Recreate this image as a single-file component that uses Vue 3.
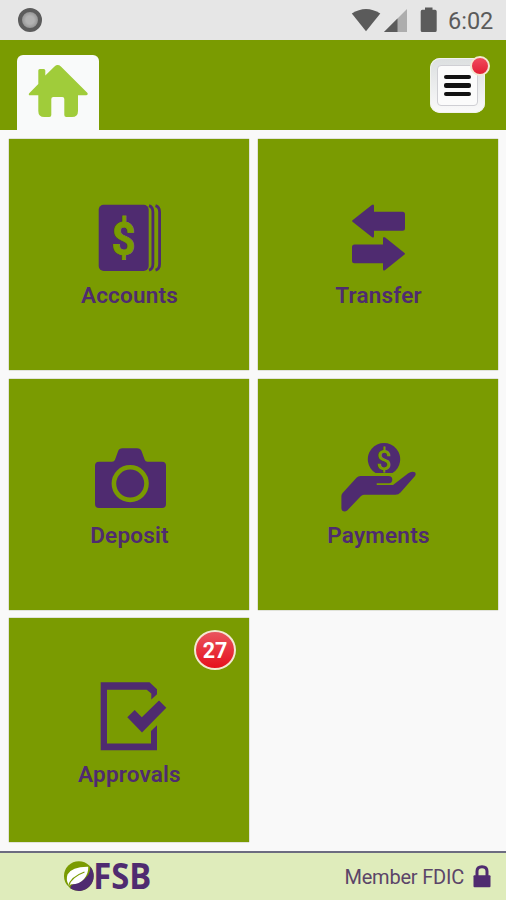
<script setup>
const tiles = [
  { id: 'accounts', label: 'Accounts' },
  { id: 'transfer', label: 'Transfer' },
  { id: 'deposit', label: 'Deposit' },
  { id: 'payments', label: 'Payments' },
  { id: 'approvals', label: 'Approvals', badge: 27 },
]
</script>

<template>
  <div class="screen">
    <div class="status">
      <span class="recorder"></span>
      <svg class="signals" width="90" height="40" viewBox="350 0 90 40">
        <path fill="#5b5b5b" d="M351.8 13.5Q366 4.5 380.3 13.5L366 31.3Z" />
        <path fill="#adadad" d="M407 9V32H384Z" />
        <path fill="#5b5b5b" d="M397.5 18.5V32H384Z" />
        <path fill="#5b5b5b" d="M425 7.5h7.5v2.3h2.6q1.6 0 1.6 1.6v19q0 1.6-1.6 1.6h-12.8q-1.6 0-1.6-1.6v-19q0-1.6 1.6-1.6h2.7z" />
      </svg>
      <span class="time">6:02</span>
    </div>

    <header class="header">
      <div class="home">
        <svg width="60" height="54" viewBox="0 0 60 54">
          <path fill="#a0cc3a" d="M10.3 20V6.5Q10.3 5 11.8 5H15.8Q17.3 5 17.3 6.5V11.5L26.5 2.4Q29.7-.2 32.9 2.4L59.5 29Q60.2 31.3 58 31.3H50V47Q50 53 44 53H38.3Q36.3 53 36.3 51V35Q36.3 33 34.3 33H25.3Q23.3 33 23.3 35V51Q23.3 53 21.3 53H16.3Q10.3 53 10.3 47V31.3H2Q.3 31.3 1 29.5Z" />
        </svg>
      </div>
      <div class="menu">
        <div class="menu-face"><i></i><i></i><i></i></div>
        <span class="dot"></span>
      </div>
    </header>

    <main class="grid">
      <div v-for="t in tiles" :key="t.id" class="tile">
        <svg class="icon" width="90" height="76" viewBox="0 0 90 76">
          <template v-if="t.id === 'accounts'">
            <rect x="14.7" y="5.7" width="50" height="66.3" rx="5" />
            <path class="line" d="M65 6.7Q68.9 8 68.9 13V65Q68.9 70 65 71.2M71.5 6.7Q75.6 8 75.6 13V65Q75.6 70 71.5 71.2" />
            <text class="cut" x="39.4" y="55.5" font-size="46" textLength="24" lengthAdjust="spacingAndGlyphs" text-anchor="middle">$</text>
          </template>
          <template v-else-if="t.id === 'transfer'">
            <path d="M19.5 21.2L38.8 5.9Q41 4.6 41 7V12.7H69.5Q72 12.7 72 15.2V29.2Q72 31.7 69.5 31.7H41V37Q41 39.5 38.8 38L19.5 22.8Q18.6 22 19.5 21.2Z" />
            <path d="M71.5 53.9L52.2 38.6Q50 37.2 50 39.6V45.6H21.5Q19 45.6 19 48.1V61.8Q19 64.3 21.5 64.3H50V70Q50 72.5 52.2 71L71.5 55.5Q72.4 54.7 71.5 53.9Z" />
          </template>
          <template v-else-if="t.id === 'deposit'">
            <path d="M15 22.7H28Q30.3 22.7 31 20.8L34 12.5Q35 9.3 38.5 9.3H53Q56.5 9.3 57.7 12.5L60.7 20.8Q61.4 22.7 63.5 22.7H78Q82 22.7 82 26.7V65Q82 69 78 69H15Q11 69 11 65V26.7Q11 22.7 15 22.7Z" />
            <circle class="ring" cx="46.2" cy="44.6" r="16.3" />
          </template>
          <template v-else-if="t.id === 'payments'">
            <path d="M42.5 34A16.2 16.2 0 1 1 59.5 34Z" />
            <text class="cut coin" x="51" y="30.8" font-size="27" text-anchor="middle">$</text>
            <path d="M9.6 54L23.5 38.7Q25 37 27.5 37H55.5Q59.3 37 59.3 40.6T56 44.2H43.7V46H60L75.3 34.2Q78.5 31.8 82 33.2Q83.3 35 82 37L67.5 53.5Q65.5 55.8 62.5 55.8H31Q29 55.8 27.5 57.5L14.2 71.5Q12 73 9.6 72Q8.4 71 8.4 69V57Q8.4 55.5 9.6 54Z" />
          </template>
          <template v-else>
            <path d="M16.7 4.3H65.5L73 11.3V16.2L67.3 21.6V15.6L62.7 11.7H23V65.5H67V53L73 47.2V72.3H16.7Z" />
            <path d="M43.3 39.3L50.7 32L57.8 39.2L75 22.6L82.3 29.8L58 54.4Z" />
          </template>
        </svg>
        <span class="label">{{ t.label }}</span>
        <span v-if="t.badge" class="badge">{{ t.badge }}</span>
      </div>
    </main>

    <footer class="footer">
      <svg class="logo" width="100" height="47" viewBox="62 853 100 47">
        <circle cx="78.8" cy="876" r="14.8" fill="#7a9b01" />
        <path fill="#4f2b70" d="M90.3 866.5A15 15 0 0 1 70.5 888.6Q69 884 80 882Q91 876 90.3 866.5Z" />
        <path fill="#fff" d="M88.3 866.8Q72 866.5 67.5 874.5Q65.8 880 68.3 884L67.6 887L71 884.3Q79.5 884.5 84 879Q88.5 874 88.3 866.8Z" />
        <path fill="none" stroke="#7a9b01" stroke-width="1.2" d="M68.5 886Q71 877 84.5 872" />
        <text x="93.3" y="889.3" textLength="58" lengthAdjust="spacingAndGlyphs">FSB</text>
      </svg>
      <div class="member">
        <span class="fdic">Member FDIC</span>
        <svg width="18" height="24" viewBox="0 0 18 24">
          <path fill="none" stroke="#4f2b70" stroke-width="3" d="M4 12V6.3Q4 1.8 9 1.8T14 6.3V12" />
          <rect x=".5" y="10.2" width="17" height="12" rx="1" fill="#4f2b70" />
        </svg>
      </div>
    </footer>
  </div>
</template>

<style>
body { margin: 0; }
</style>

<style scoped>
.screen {
  width: 506px;
  height: 900px;
  display: flex;
  flex-direction: column;
  overflow: hidden;
  background: #f9f9f9;
  font-family: Roboto, sans-serif;
}
.status {
  height: 40px;
  flex: none;
  display: flex;
  align-items: center;
  background: #e6e6e6;
}
.recorder {
  box-sizing: border-box;
  width: 24px;
  height: 24px;
  margin-left: 18px;
  border: 4px solid #5c5c5c;
  border-radius: 50%;
  background: radial-gradient(circle, #b2b2b2 35%, #929292 75%);
}
.signals { margin-left: 308px; }
.time {
  margin-left: 8px;
  padding-top: 2px;
  font-size: 23.5px;
  line-height: 28px;
  color: #5b5b5b;
}
.header {
  box-sizing: border-box;
  height: 90px;
  flex: none;
  display: flex;
  justify-content: space-between;
  align-items: flex-end;
  padding: 0 21px 0 17px;
  background: #7a9b01;
}
.home {
  box-sizing: border-box;
  width: 82px;
  height: 75px;
  padding: 9px 0 0 11px;
  border-radius: 6px 6px 0 0;
  background: #f9fafa;
}
.menu {
  position: relative;
  box-sizing: border-box;
  width: 55px;
  height: 55px;
  margin-bottom: 17px;
  padding: 7px;
  border-radius: 10px;
  background: linear-gradient(#dcdfe0, #fafafa);
  box-shadow: inset 0 0 0 1px #f1f3ec;
}
.menu-face {
  box-sizing: border-box;
  width: 41px;
  height: 41px;
  display: flex;
  flex-direction: column;
  align-items: center;
  justify-content: center;
  gap: 4px;
  border: 1px solid #cfcfd4;
  border-radius: 4px;
  background: #fbfbfb;
}
.menu-face i {
  width: 27px;
  height: 4.5px;
  border-radius: 2px;
  background: #111;
}
.dot {
  position: absolute;
  box-sizing: border-box;
  right: -5px;
  top: -2px;
  width: 20px;
  height: 20px;
  border: 2px solid #f3e8d2;
  border-radius: 50%;
  background: linear-gradient(#f04a5c, #e32035);
}
.grid {
  flex: 1;
  display: grid;
  grid-template-columns: 240px 240px;
  grid-template-rows: 231px 231px 224px;
  column-gap: 9px;
  row-gap: 8.5px;
  padding: 9px 8px 0 9px;
}
.tile {
  position: relative;
  display: flex;
  flex-direction: column;
  align-items: center;
  background: #7a9b01;
  box-shadow: 0 0 1px #6b7742;
}
.icon {
  margin-top: 60px;
  fill: #4f2b70;
}
.line { fill: none; stroke: #4f2b70; stroke-width: 2.8; }
.ring { fill: none; stroke: #7a9b01; stroke-width: 4.6; }
.cut {
  fill: #7a9b01;
  stroke: #7a9b01;
  stroke-width: 0.8;
  font-weight: 700;
}
.cut.coin { stroke-width: 0; font-weight: 500; }
.label {
  margin-top: 7px;
  padding-left: 1px;
  font-size: 22.5px;
  font-weight: 600;
  line-height: 26px;
  letter-spacing: 0.2px;
  color: #4f2b70;
}
.badge {
  position: absolute;
  box-sizing: border-box;
  right: 13px;
  top: 12px;
  width: 42px;
  height: 40px;
  border: 2px solid #f3e8d2;
  border-radius: 50%;
  background: linear-gradient(#e9555d, #e6101d);
  color: #fff;
  font-size: 21.5px;
  font-weight: 700;
  line-height: 37px;
  text-align: center;
}
.footer {
  box-sizing: border-box;
  height: 49px;
  flex: none;
  display: flex;
  justify-content: space-between;
  align-items: center;
  padding: 0 15px 0 62px;
  border-top: 2px solid #6c6c80;
  background: #dfecbb;
}
.logo { overflow: visible; }
.logo text {
  font-family: "Open Sans", sans-serif;
  font-size: 36px;
  font-weight: 700;
  fill: #4f2b70;
}
.member {
  display: flex;
  align-items: center;
  gap: 9px;
}
.fdic {
  font-size: 20px;
  line-height: 24px;
  letter-spacing: -0.2px;
  color: #5b4568;
}
</style>
